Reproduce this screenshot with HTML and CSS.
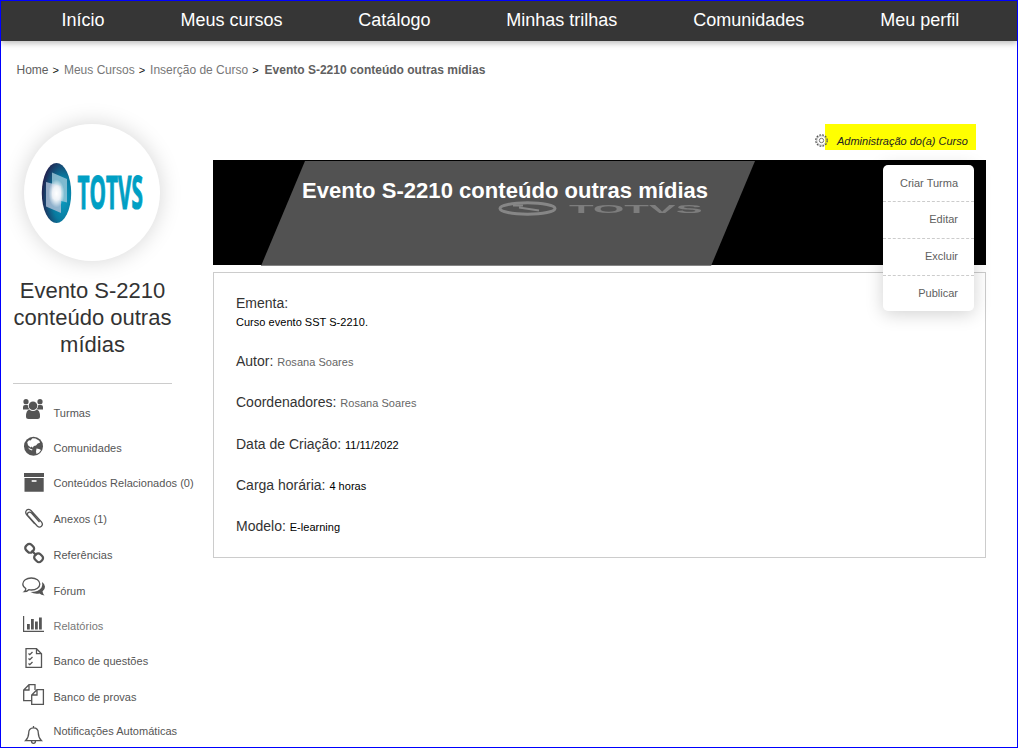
FILE: index.html
```html
<!DOCTYPE html>
<html lang="pt-BR">
<head>
<meta charset="utf-8">
<title>Evento S-2210 conteúdo outras mídias</title>
<link rel="stylesheet" href="styles.css">
</head>
<body>
<div class="page">
  <nav class="nav">
    <a>Início</a><a>Meus cursos</a><a>Catálogo</a><a>Minhas trilhas</a><a>Comunidades</a><a>Meu perfil</a>
  </nav>
  <div class="crumbs">
    <a class="home">Home</a><i>&gt;</i><a>Meus Cursos</a><i>&gt;</i><a>Inserção de Curso</a><i>&gt;</i><b>Evento S-2210 conteúdo outras mídias</b>
  </div>
  <div class="body">
    <aside class="side">
      <div class="avatar">
        <svg width="136" height="136" viewBox="0 0 136 136">
          <defs>
            <radialGradient id="orb" cx=".72" cy=".6" r=".74"><stop offset="0" stop-color="#0b9cc0"/><stop offset=".5" stop-color="#087a9f"/><stop offset="1" stop-color="#22204d"/></radialGradient>
            <radialGradient id="glow"><stop offset="0" stop-color="#fff"/><stop offset=".5" stop-color="#fff" stop-opacity=".8"/><stop offset="1" stop-color="#fff" stop-opacity="0"/></radialGradient>
          </defs>
          <ellipse cx="32.500" cy="69" rx="14.700" ry="30" fill="url(#orb)"/>
          <g class="panes">
            <path d="M28 48.500l15 6.500v23.500l-15-4z" fill="#9cc8da" opacity=".8"/>
            <path d="M22 58l15 4v27l-15-6.500z" fill="#b3c0d8" opacity=".8"/>
            <ellipse cx="32.500" cy="69.500" rx="8" ry="14" fill="url(#glow)"/>
          </g>
          <text class="logo" transform="translate(53.500 85) scale(.45 1)">TOTVS</text>
        </svg>
      </div>
      <h2>Evento S-2210 conteúdo outras mídias</h2>
      <ul class="menu">
        <li><svg viewBox="0 0 26 35"><circle cx="6" cy="6.700" r="2.600"/><circle cx="20" cy="6.700" r="2.600"/><path d="M3 14.500v-2.500q0-2 2-2h2.700q.2 2.800 2 4.500zM23 14.500v-2.500q0-2-2-2h-2.700q-.2 2.800-2 4.500z"/><circle cx="13" cy="10.800" r="4.300"/><path d="M6 21.500q0-6.500 3.500-6.700 1.500 1.200 3.500 1.200t3.500-1.200q3.500.2 3.500 6.700 0 2.500-2.500 2.500h-9q-2.500 0-2.500-2.500z"/></svg><a>Turmas</a></li>
        <li><svg viewBox="0 0 26 35"><circle cx="13.500" cy="16.300" r="9.500"/><path class="cut" d="M12.500 8.300l3 .2 3.800 2.300.7 2-2.300.7-1.700 2-2.200.5-1 1.800-1.300-1.200-.8 1-2.700-2.300-.8-3 1.800-2 1.500.2zM16.500 18.500l2.500.6 2 1-1.800 2.300-2.700 1.600-.5-2.500zM8 17.500l3 1.500 1.500.5-.5 1-2.500-1z"/></svg><a>Comunidades</a></li>
        <li><svg viewBox="0 0 26 35"><path d="M4 8h20v4H4zM4.500 13h19.200v13.700H4.500z"/><path class="cut" d="M11.700 15.200h4.800v1.600h-4.800z"/></svg><a>Conteúdos Relacionados (0)</a></li>
        <li><svg viewBox="0 0 26 35"><path class="line" d="M19.500 21l-8-9q-2-1.700-3.500-.3-1.300 1.500.2 3.300l9 10q2.200 2 4.200.3 2-2 0-4.500L11 9.500Q8.500 7.400 6.500 9.300q-1.700 2 .2 4.500l8 9"/></svg><a>Anexos (1)</a></li>
        <li><svg viewBox="0 0 26 35"><g fill="none" stroke="#555" stroke-width="2.300"><rect x="5.400" y="7.500" width="8.500" height="7.500" rx="3" transform="rotate(45 9.600 11.300)"/><rect x="14.400" y="17" width="8.500" height="7.500" rx="3" transform="rotate(45 18.600 20.700)"/><path d="M11.500 13.500l5 5"/></g></svg><a>Referências</a></li>
        <li><svg viewBox="0 0 26 35"><path d="M22 9q3 2 3 4.800 0 2.800-2.500 4.700.5 2.500 2 4-3.500-.5-5-2-5 1-9-1.500 8 0 11-4.500 1.300-2.500.5-5.500z"/><path class="line white" d="M11.300 5c5 0 8.500 2.700 8.500 6s-3.500 6-8.500 6q-1.300 0-2.500-.3-2 2-4.500 2 1.500-1.200 1.500-3.200-3-1.800-3-4.500c0-3.300 3.500-6 8.500-6z"/></svg><a>Fórum</a></li>
        <li class="pale"><svg viewBox="0 0 26 35"><path d="M3 8h1.200v14.800H24V24H3zM7 16h2.800v5.500H7zM11 11h2.800v10.500H11zM15 13.500h2.800v8H15zM19 9.500h2.800v12H19z"/></svg><a>Relatórios</a></li>
        <li><svg viewBox="0 0 26 35"><path class="line" d="M6 5.700h10.500l5 5v13.600H6zM16.500 6v4.700h5"/><path class="line" d="M8.500 10.500l1.300 1.200 2.700-2.700M8.500 15.500l1.300 1.200 2.700-2.700M8.500 20.500l1.300 1.200 2.700-2.700"/></svg><a>Banco de questões</a></li>
        <li><svg viewBox="0 0 26 35"><path class="line" d="M15 11V5.700H9L3.700 11v10.700h8M3.700 11H9V5.700"/><path class="line" d="M17 10.700h6.400v14.600H11.700V16zM11.700 16H17v-5.300"/></svg><a>Banco de provas</a></li>
        <li><svg viewBox="0 0 26 35"><path class="line" d="M13.500 14.800c-3.500 0-4.800 2.500-4.800 5.200 0 4-1 5.500-3.200 7.700h16c-2.200-2.200-3.200-3.700-3.200-7.700 0-2.700-1.300-5.200-4.800-5.200zM13.500 13v1.800M11.500 28q0 2.300 2 2.300t2-2.300"/></svg><a>Notificações Automáticas</a></li>
      </ul>
    </aside>
    <main class="main">
      <div class="admin">
        <svg width="13" height="13" viewBox="0 0 13 13"><circle cx="6.500" cy="6.500" r="5.700" fill="none" stroke="#555" stroke-width="1.300" stroke-dasharray="1.800 1.180"/><circle cx="6.500" cy="6.500" r="4.700" fill="none" stroke="#888" stroke-width=".6"/><circle cx="6.500" cy="6.500" r="2.200" fill="none" stroke="#666" stroke-width=".9"/></svg>
        <em>Administração do(a) Curso</em>
      </div>
      <div class="banner">
        <svg width="773" height="106" viewBox="0 0 773 106">
          <path d="M0 0h773v105H0z"/>
          <path d="M92 1h450l-44 105H48z" fill="#525252"/>
          <path d="M48.500 105H498v1H48z" fill="#858585"/>
          <g class="mark"><ellipse cx="314.500" cy="48.500" rx="27.500" ry="5.700" fill="none" stroke="#868686" stroke-width="3"/><path d="M300 45.500h10M306 47.500l20 3" fill="none" stroke="#868686" stroke-width="2.200"/>
          <text class="ghost" transform="translate(356 52.500) scale(1.120 .3)">TOTVS</text></g>
        </svg>
        <h1>Evento S-2210 conteúdo outras mídias</h1>
        <div class="drop"><a>Criar Turma</a><a>Editar</a><a>Excluir</a><a>Publicar</a></div>
      </div>
      <section class="info">
        <p class="first"><span>Ementa:</span><br><small>Curso evento SST S-2210.</small></p>
        <p><span>Autor:</span> <small class="who">Rosana Soares</small></p>
        <p><span>Coordenadores:</span> <small class="who">Rosana Soares</small></p>
        <p><span>Data de Criação:</span> <small>11/11/2022</small></p>
        <p><span>Carga horária:</span> <small>4 horas</small></p>
        <p><span>Modelo:</span> <small>E-learning</small></p>
      </section>
    </main>
  </div>
</div>
</body>
</html>
```
FILE: styles.css
```css
* { box-sizing: border-box; }
body { margin: 0; background: #fff; font-family: "Liberation Sans", Arial, sans-serif; }
.page { width: 1018px; height: 748px; border: 1px solid #00f; overflow: hidden; }
.nav { display: flex; gap: 75.9px; height: 40px; padding-left: 60.500px; background: #363636; color: #fff; font-size: 18px; line-height: 38px; white-space: nowrap; box-shadow: 0 2px 6px rgba(0,0,0,.28); }
.crumbs { display: flex; height: 56px; padding: 21px 0 0 15.5px; font-size: 12px; line-height: 16px; color: #777; white-space: nowrap; }
.crumbs i { font-style: normal; font-size: 11px; color: #111; margin: 0 5px 0 4px; }
.crumbs b { margin-left: 1px; }
.crumbs b, .crumbs .home { color: #606060; }
.body { display: flex; }
.side { width: 212px; padding: 27px 0 0 12px; flex: none; }
.avatar { width: 136px; height: 137px; margin-left: 11px; border-radius: 50%; background: #fff; box-shadow: 0 0 22px rgba(0,0,0,.17); }
.avatar svg { display: block; overflow: visible; }
.panes { filter: blur(.5px); }
.logo { font: bold 46px "Open Sans", sans-serif; fill: #009fc4; stroke: #009fc4; stroke-width: 1.2px; }
.side h2 { width: 159px; height: 107px; margin: 16px 0 0; border-bottom: 1px solid #ccc; color: #333; font-weight: 400; font-size: 22px; line-height: 27px; text-align: center; }
.menu { display: grid; grid-template-rows: 35px 35px 36px 36px 36px 35px 35px 36px 34px 35px; margin: 11px 0 0; padding: 0 0 0 7px; list-style: none; color: #555; font-size: 11px; letter-spacing: .03px; }
.menu li { display: flex; gap: 7.5px; line-height: 36px; white-space: nowrap; }
.menu svg { width: 26px; height: 35px; flex: none; fill: #555; }
.menu .pale { color: #777; }
.menu .cut { fill: #fff; }
.menu .line { fill: none; stroke: #555; stroke-width: 1.3; }
.menu .white { fill: #fff; }
.main { width: 773px; padding-top: 27px; }
.admin { display: flex; justify-content: flex-end; height: 36px; padding-right: 10px; }
.admin svg { margin: 10px -3px 0 0; position: relative; z-index: 1; }
.admin em { width: 151px; height: 26px; padding-left: 12px; background: #ff0; color: #222; font-size: 11px; line-height: 35px; white-space: nowrap; }
.banner { position: relative; height: 112px; }
.banner svg { display: block; }
.banner h1 { position: absolute; left: 89px; top: 17px; margin: 0; color: #fff; font-size: 22px; line-height: 28px; letter-spacing: .04px; white-space: nowrap; }
.ghost { font: bold 36px "Liberation Sans", sans-serif; fill: #7d7d7d; }
.mark { filter: blur(.6px); }
.drop { position: absolute; left: 670px; top: 5px; width: 91px; height: 146px; border-radius: 5px; background: #fff; box-shadow: 0 3px 18px rgba(0,0,0,.18); color: #606060; font-size: 11px; text-align: right; }
.drop a { display: block; height: 37px; padding-right: 16px; border-bottom: 1px dashed #ccc; line-height: 34px; }
.drop a:first-child { line-height: 36px; }
.drop a:last-child { border: 0; }
.info { height: 286px; padding: 20px 22px; border: 1px solid #ccc; color: #333; font-size: 14px; }
.info p { height: 41.3px; margin: 0; line-height: 20px; white-space: nowrap; }
.info .first { height: 58px; line-height: 18px; padding-top: 1px; }
.info small { font-size: 11px; letter-spacing: .03px; color: #000; }
.info .who { color: #666; }
```
